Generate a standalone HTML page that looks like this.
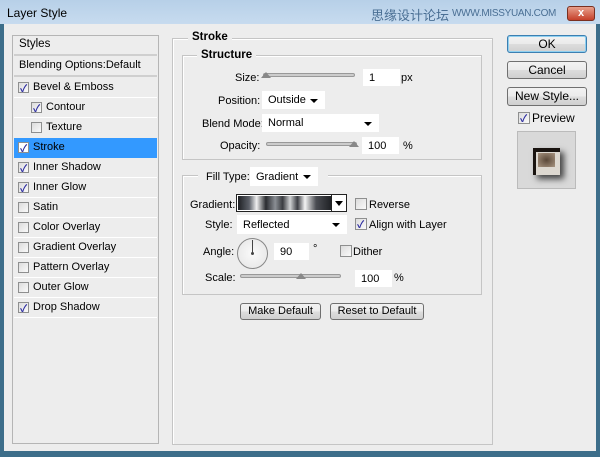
<!DOCTYPE html>
<html><head><meta charset="utf-8"><style>
*{box-sizing:border-box;margin:0;padding:0}
body{width:600px;height:457px;overflow:hidden;background:#3d6e8a;font-family:"Liberation Sans","Noto Sans CJK SC",sans-serif;font-size:11px;color:#000;position:relative}
.a{position:absolute}
#title{left:0;top:0;width:600px;height:24px;background:linear-gradient(#b7d0e8,#c7dbef);}
#client{left:4px;top:24px;width:592px;height:427px;background:#ededed}
.t{position:absolute;white-space:nowrap}
.cb{position:absolute;width:11px;height:11px;border:1px solid #8e8f8f;background:linear-gradient(135deg,#dcdcdc,#fafafa)}
.cb.on::after{content:"✓";position:absolute;left:1px;top:-3px;font-size:10px;color:#2b2ba0;font-weight:bold}
.row{position:absolute;left:14px;width:143px;height:20px;border-bottom:1px solid #fff}
.grp{position:absolute;border:1px solid #c5c5c5;box-shadow:inset 1px 1px 0 #fff}
.lbl{position:absolute;background:#ededed;padding:0 4px;font-weight:bold}
.inp{position:absolute;background:#fff;height:17px;padding:0 0 0 6px;display:flex;align-items:center}
.sel::after{content:"";position:absolute;right:7px;top:8px;border:4px solid transparent;border-top:4px solid #000;border-bottom:0}
.slider{position:absolute;height:4px;border:1px solid #999;background:#ccc;border-radius:2px}
.thumb{position:absolute;width:0;height:0;border:5px solid transparent;border-bottom:6px solid #888;border-top:0}
.btn{position:absolute;border:1px solid #707070;border-radius:3px;background:linear-gradient(#f2f2f2,#ebebeb 50%,#dddddd 51%,#cfcfcf);text-align:center;font-size:12px}
</style></head><body>
<div id="title" class="a"></div>
<div class="t" style="left:7px;top:6px;font-size:12px">Layer Style</div>
<div class="t" style="left:371px;top:5px;font-size:13px;color:#4a6f94">思缘设计论坛</div>
<div class="t" style="left:452px;top:8px;font-size:10px;color:#4a6f94;letter-spacing:-0.3px">WWW.MISSYUAN.COM</div>
<div class="a" style="left:567px;top:6px;width:28px;height:15px;border-radius:3px;background:linear-gradient(#e8a08c,#c5402a);border:1px solid #7a3020;color:#fff;text-align:center;font-weight:bold;font-size:11px;line-height:13px">x</div>
<div id="client" class="a"></div>

<!-- left list -->
<div class="a" style="left:12px;top:35px;width:147px;height:409px;border:1px solid #b5b5b5;background:#ededed"></div>
<div class="row" style="top:36px;border-bottom:2px solid #cfcfcf"></div>
<div class="t" style="left:19px;top:38px;font-size:11.5px">Styles</div>
<div class="row" style="top:57px;border-bottom:2px solid #cfcfcf"></div>
<div class="t" style="left:19px;top:59px">Blending Options:Default</div>
<div class="a" style="left:14px;top:138px;width:143px;height:20px;background:#3399ff"></div>
<div class="cb on" style="left:18px;top:82px"></div><div class="t" style="left:33px;top:81px">Bevel &amp; Emboss</div>
<div class="cb on" style="left:31px;top:102px"></div><div class="t" style="left:46px;top:101px">Contour</div>
<div class="cb" style="left:31px;top:122px"></div><div class="t" style="left:46px;top:121px">Texture</div>
<div class="cb on" style="left:18px;top:142px;background:#fff"></div><div class="t" style="left:33px;top:141px">Stroke</div>
<div class="cb on" style="left:18px;top:162px"></div><div class="t" style="left:33px;top:161px">Inner Shadow</div>
<div class="cb on" style="left:18px;top:182px"></div><div class="t" style="left:33px;top:181px">Inner Glow</div>
<div class="cb" style="left:18px;top:202px"></div><div class="t" style="left:33px;top:201px">Satin</div>
<div class="cb" style="left:18px;top:222px"></div><div class="t" style="left:33px;top:221px">Color Overlay</div>
<div class="cb" style="left:18px;top:242px"></div><div class="t" style="left:33px;top:241px">Gradient Overlay</div>
<div class="cb" style="left:18px;top:262px"></div><div class="t" style="left:33px;top:261px">Pattern Overlay</div>
<div class="cb" style="left:18px;top:282px"></div><div class="t" style="left:33px;top:281px">Outer Glow</div>
<div class="cb on" style="left:18px;top:302px"></div><div class="t" style="left:33px;top:301px">Drop Shadow</div>
<div class="a" style="left:14px;top:97px;width:143px;border-top:1px solid #fff"></div>
<div class="a" style="left:14px;top:117px;width:143px;border-top:1px solid #fff"></div>
<div class="a" style="left:14px;top:177px;width:143px;border-top:1px solid #fff"></div>
<div class="a" style="left:14px;top:197px;width:143px;border-top:1px solid #fff"></div>
<div class="a" style="left:14px;top:217px;width:143px;border-top:1px solid #fff"></div>
<div class="a" style="left:14px;top:237px;width:143px;border-top:1px solid #fff"></div>
<div class="a" style="left:14px;top:257px;width:143px;border-top:1px solid #fff"></div>
<div class="a" style="left:14px;top:277px;width:143px;border-top:1px solid #fff"></div>
<div class="a" style="left:14px;top:297px;width:143px;border-top:1px solid #fff"></div>
<div class="a" style="left:14px;top:317px;width:143px;border-top:1px solid #fff"></div>

<!-- main group -->
<div class="grp" style="left:172px;top:38px;width:321px;height:407px"></div>
<div class="lbl" style="left:188px;top:31px;font-size:11.5px">Stroke</div>
<div class="grp" style="left:182px;top:55px;width:300px;height:105px"></div>
<div class="lbl" style="left:197px;top:49px;font-size:11.5px">Structure</div>
<div class="t" style="left:235px;top:72px">Size:</div>
<div class="slider" style="left:263px;top:73px;width:92px"></div><div class="thumb" style="left:261px;top:72px"></div>
<div class="inp" style="left:363px;top:69px;width:37px">1</div><div class="t" style="left:401px;top:72px">px</div>
<div class="t" style="left:218px;top:95px">Position:</div>
<div class="inp sel" style="left:262px;top:91px;width:63px;height:18px">Outside</div>
<div class="t" style="left:202px;top:118px">Blend Mode:</div>
<div class="inp sel" style="left:262px;top:114px;width:117px;height:18px">Normal</div>
<div class="t" style="left:220px;top:140px">Opacity:</div>
<div class="slider" style="left:266px;top:142px;width:91px"></div><div class="thumb" style="left:349px;top:141px"></div>
<div class="inp" style="left:362px;top:137px;width:37px">100</div><div class="t" style="left:403px;top:140px">%</div>

<div class="grp" style="left:182px;top:175px;width:300px;height:120px"></div>
<div class="a" style="left:198px;top:167px;width:130px;height:20px;background:#ededed"></div>
<div class="t" style="left:206px;top:171px">Fill Type:</div>
<div class="inp sel" style="left:250px;top:167px;width:68px;height:19px">Gradient</div>
<div class="t" style="left:190px;top:199px">Gradient:</div>
<div class="a" style="left:236px;top:194px;width:111px;height:18px;border:1px solid #222;background:#fff"></div>
<div class="a" style="left:238px;top:196px;width:93px;height:14px;background:linear-gradient(90deg,#1e2024,#5c6068 12%,#f0f0f0 20%,#2a2c30 30%,#8a8e94 40%,#3a3c40 48%,#d0d2d4 56%,#3c3e44 64%,#f4f4f4 72%,#4a4c52 84%,#202226)"></div>
<div class="a" style="left:331px;top:195px;width:1px;height:16px;background:#222"></div>
<div class="a" style="left:335px;top:201px;border:4px solid transparent;border-top:5px solid #000;border-bottom:0"></div>
<div class="cb" style="left:355px;top:198px;width:12px;height:12px"></div><div class="t" style="left:369px;top:199px">Reverse</div>
<div class="t" style="left:205px;top:219px">Style:</div>
<div class="inp sel" style="left:237px;top:215px;width:110px;height:19px">Reflected</div>
<div class="cb on" style="left:355px;top:218px;width:12px;height:12px"></div><div class="t" style="left:369px;top:219px">Align with Layer</div>
<div class="t" style="left:203px;top:246px">Angle:</div>
<div class="a" style="left:237px;top:238px;width:31px;height:31px;border-radius:50%;border:1px solid #888;background:radial-gradient(#fafafa,#e4e4e4)"></div>
<div class="a" style="left:252px;top:240px;width:1px;height:14px;background:#444"></div>
<div class="a" style="left:251px;top:252px;width:3px;height:3px;border-radius:50%;background:#444"></div>
<div class="inp" style="left:274px;top:243px;width:35px">90</div><div class="t" style="left:313px;top:243px">°</div>
<div class="cb" style="left:340px;top:245px;width:12px;height:12px"></div><div class="t" style="left:353px;top:246px">Dither</div>
<div class="t" style="left:205px;top:272px">Scale:</div>
<div class="slider" style="left:240px;top:274px;width:101px"></div><div class="thumb" style="left:296px;top:273px"></div>
<div class="inp" style="left:355px;top:270px;width:37px">100</div><div class="t" style="left:394px;top:272px">%</div>

<div class="btn" style="left:240px;top:303px;width:81px;height:17px;line-height:15px;font-size:11px">Make Default</div>
<div class="btn" style="left:330px;top:303px;width:94px;height:17px;line-height:15px;font-size:11px">Reset to Default</div>

<!-- right -->
<div class="btn" style="left:507px;top:35px;width:80px;height:18px;line-height:16px;border-color:#3c7fb1;box-shadow:0 0 0 1px #8fd0f0 inset">OK</div>
<div class="btn" style="left:507px;top:61px;width:80px;height:18px;line-height:16px">Cancel</div>
<div class="btn" style="left:507px;top:87px;width:80px;height:19px;line-height:17px">New Style...</div>
<div class="cb on" style="left:518px;top:112px;width:12px;height:12px"></div><div class="t" style="left:532px;top:111px;font-size:12px">Preview</div>
<div class="a" style="left:517px;top:131px;width:59px;height:58px;border:1px solid #bbb;background:#d9d9d9"></div>
<div class="a" style="left:533px;top:148px;width:27px;height:27px;box-shadow:4px 4px 6px #444;background:#ddd8d0;border-top:4px solid #1a1410;border-left:3px solid #1a1410"></div>
<div class="a" style="left:538px;top:153px;width:17px;height:14px;background:radial-gradient(#5a4838,#a89480)"></div>
</body></html>
